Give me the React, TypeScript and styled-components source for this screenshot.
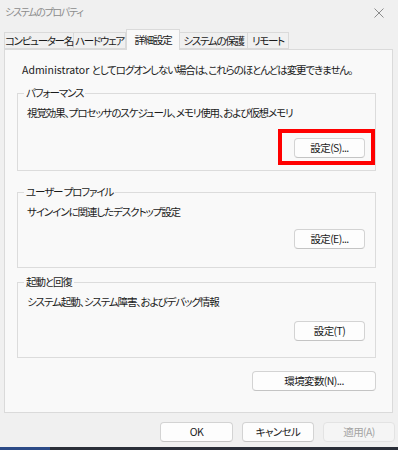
import React from 'react';
import styled, { createGlobalStyle } from 'styled-components';

const GlobalStyle = createGlobalStyle`
  html, body {
    margin: 0;
    padding: 0;
    background: #f0f0f0;
  }
  body {
    font-family: "Noto Sans CJK JP", "Noto Sans", sans-serif;
    font-size: 10.5px;
    letter-spacing: -1.1px;
    color: #1b1b1b;
    font-feature-settings: "palt";
  }
  * {
    box-sizing: border-box;
  }
`;

const Window = styled.div`
  width: 398px;
  height: 447px;
  display: flex;
  flex-direction: column;
  background: #f0f0f0;
`;

const TitleBar = styled.div`
  height: 29px;
  display: flex;
  align-items: flex-start;
  justify-content: space-between;
  padding: 4px 6px 0 5px;
`;

const Title = styled.span`
  color: #8c8c8c;
  font-size: 10px;
  letter-spacing: -1.3px;
  line-height: 16px;
`;

const CloseIcon = styled.svg`
  width: 10px;
  height: 10px;
  margin: 4px 8px 0 0;
`;

const TabRow = styled.div`
  height: 20px;
  display: flex;
  align-items: flex-end;
  padding-left: 4px;
  position: relative;
  z-index: 1;
`;

const Tab = styled.div<{ $active?: boolean; $first?: boolean; $w: number }>`
  width: ${p => p.$w}px;
  height: ${p => (p.$active ? 21 : 17)}px;
  margin-bottom: ${p => (p.$active ? -1 : 0)}px;
  display: flex;
  align-items: center;
  justify-content: center;
  padding-top: ${p => (p.$active ? 0 : 1)}px;
  border-top: 1px solid #dadada;
  border-right: 1px solid #dadada;
  border-bottom: ${p => (p.$active ? 'none' : '1px solid #dadada')};
  border-left: ${p => (p.$first || p.$active ? '1px solid #dadada' : 'none')};
  background: ${p => (p.$active ? '#f9f9f9' : '#f0f0f0')};
  letter-spacing: -1.3px;
  line-height: 14px;
  white-space: nowrap;
`;

const Panel = styled.div`
  height: 364px;
  margin: 0 5px 0 4px;
  border: 1px solid #dadada;
  background: #f9f9f9;
  padding: 12px 16px 0 12px;
  display: flex;
  flex-direction: column;
`;

const Notice = styled.div`
  padding-left: 5px;
  line-height: 16px;
  white-space: nowrap;
`;

const Latin = styled.span`
  letter-spacing: 0;
`;

const GroupBox = styled.div<{ $h: number; $mt: number }>`
  position: relative;
  height: ${p => p.$h}px;
  margin-top: ${p => p.$mt}px;
  border: 1px solid #dcdcdc;
  padding: 11px 10px 0 9px;
  display: flex;
  flex-direction: column;
`;

const Legend = styled.span`
  position: absolute;
  top: -9px;
  left: 6px;
  padding: 0 2px;
  background: #f9f9f9;
  line-height: 16px;
  white-space: nowrap;
`;

const Description = styled.div`
  line-height: 16px;
  white-space: nowrap;
`;

const ButtonRow = styled.div<{ $mt: number }>`
  position: relative;
  display: flex;
  justify-content: flex-end;
  margin-top: ${p => p.$mt}px;
`;

const Button = styled.button<{ $w: number }>`
  width: ${p => p.$w}px;
  height: 20px;
  padding: 0;
  border: 1px solid #d3d3d3;
  border-bottom-color: #c4c4c4;
  border-radius: 4px;
  background: #fdfdfd;
  color: #1b1b1b;
  font-family: inherit;
  font-size: 10.5px;
  letter-spacing: -0.6px;
  font-feature-settings: "palt";
  line-height: 14px;
  cursor: pointer;

  &:disabled {
    background: #f5f5f5;
    border-color: #e3e3e3;
    color: #a3a3a3;
    cursor: default;
  }
`;

const Highlight = styled.div`
  position: absolute;
  top: -9px;
  right: -10px;
  width: 97px;
  height: 36px;
  border: 4px solid #ff0000;
  pointer-events: none;
`;

const EnvRow = styled.div`
  display: flex;
  justify-content: flex-end;
  margin-top: 13px;
`;

const Footer = styled.div`
  display: flex;
  justify-content: flex-end;
  gap: 9px;
  padding: 9px 3px 0 0;
`;

const Taskbar = styled.div`
  height: 3px;
  display: flex;
  background: #2a2e38;
`;

const TaskbarAccent = styled.div`
  width: 50px;
  background: #2c4a86;
`;

const tabs = [
  { label: 'コンピューター名', w: 70 },
  { label: 'ハードウェア', w: 52 },
  { label: '詳細設定', w: 54, active: true },
  { label: 'システムの保護', w: 68 },
  { label: 'リモート', w: 41 },
];

const groups = [
  { title: 'パフォーマンス', desc: '視覚効果、プロセッサのスケジュール、メモリ使用、および仮想メモリ', button: '設定(S)...', h: 78, mt: 15, bmt: 17, highlight: true },
  { title: 'ユーザー プロファイル', desc: 'サインインに関連したデスクトップ設定', button: '設定(E)...', h: 76, mt: 21, bmt: 9 },
  { title: '起動と回復', desc: 'システム起動、システム障害、およびデバッグ情報', button: '設定(T)', h: 76, mt: 14, bmt: 11 },
];

export default function App() {
  return (
    <>
      <GlobalStyle />
      <Window>
        <TitleBar>
          <Title>システムのプロパティ</Title>
          <CloseIcon viewBox="0 0 10 10">
            <path d="M0.5 0.5 L9.5 9.5 M9.5 0.5 L0.5 9.5" stroke="#8c8c8c" strokeWidth="1" fill="none" />
          </CloseIcon>
        </TitleBar>
        <TabRow>
          {tabs.map((t, i) => (
            <Tab key={t.label} $w={t.w} $active={t.active} $first={i === 0}>
              {t.label}
            </Tab>
          ))}
        </TabRow>
        <Panel>
          <Notice>
            <Latin>Administrator </Latin>としてログオンしない場合は、これらのほとんどは変更できません。
          </Notice>
          {groups.map(g => (
            <GroupBox key={g.title} $h={g.h} $mt={g.mt}>
              <Legend>{g.title}</Legend>
              <Description>{g.desc}</Description>
              <ButtonRow $mt={g.bmt}>
                <Button $w={71}>{g.button}</Button>
                {g.highlight && <Highlight />}
              </ButtonRow>
            </GroupBox>
          ))}
          <EnvRow>
            <Button $w={124}>環境変数(N)...</Button>
          </EnvRow>
        </Panel>
        <Footer>
          <Button $w={73}>OK</Button>
          <Button $w={72}>キャンセル</Button>
          <Button $w={72} disabled>適用(A)</Button>
        </Footer>
      </Window>
      <Taskbar>
        <TaskbarAccent />
      </Taskbar>
    </>
  );
}
